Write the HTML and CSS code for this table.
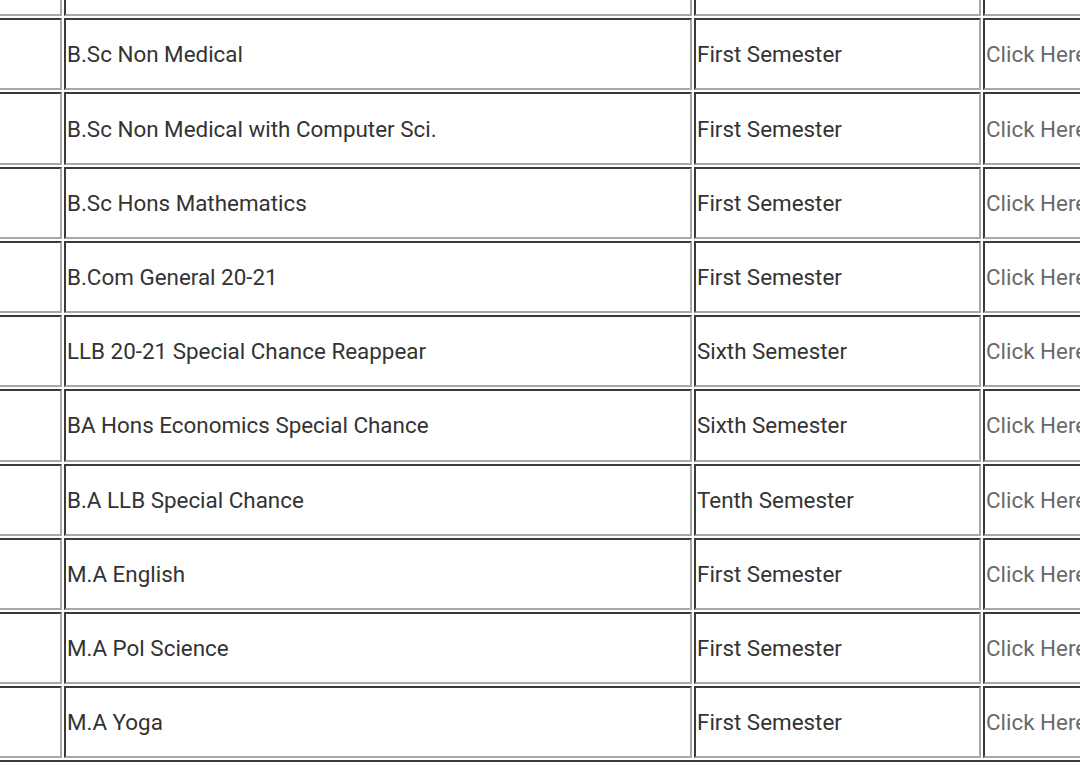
FILE: index.html
```html
<!DOCTYPE html>
<html>
<head>
<meta charset="utf-8">
<link rel="stylesheet" href="styles.css">
</head>
<body>
<div class="viewport">
<table class="results">
<colgroup>
<col class="c-num"><col class="c-course"><col class="c-sem"><col class="c-link">
</colgroup>
<tbody>
<tr><td></td><td></td><td></td><td></td></tr>
<tr><td></td><td>B.Sc Non Medical</td><td>First Semester</td><td class="link">Click Here</td></tr>
<tr><td></td><td>B.Sc Non Medical with Computer Sci.</td><td>First Semester</td><td class="link">Click Here</td></tr>
<tr><td></td><td>B.Sc Hons Mathematics</td><td>First Semester</td><td class="link">Click Here</td></tr>
<tr><td></td><td>B.Com General 20-21</td><td>First Semester</td><td class="link">Click Here</td></tr>
<tr><td></td><td>LLB 20-21 Special Chance Reappear</td><td>Sixth Semester</td><td class="link">Click Here</td></tr>
<tr><td></td><td>BA Hons Economics Special Chance</td><td>Sixth Semester</td><td class="link">Click Here</td></tr>
<tr><td></td><td>B.A LLB Special Chance</td><td>Tenth Semester</td><td class="link">Click Here</td></tr>
<tr><td></td><td>M.A English</td><td>First Semester</td><td class="link">Click Here</td></tr>
<tr><td></td><td>M.A Pol Science</td><td>First Semester</td><td class="link">Click Here</td></tr>
<tr><td></td><td>M.A Yoga</td><td>First Semester</td><td class="link">Click Here</td></tr>
</tbody>
</table>
</div>
</body>
</html>
```

FILE: styles.css
```css
html, body {
  margin: 0;
  padding: 0;
  background: #ffffff;
  overflow: hidden;
}
.viewport {
  width: 1080px;
  height: 776px;
  overflow: hidden;
}
.results {
  margin-top: -60px;
  margin-left: -42px;
  border-collapse: separate;
  border-spacing: 2px;
  border: 2px solid;
  border-color: #b5b5b5 #3a3a3a #3a3a3a #b5b5b5;
  table-layout: fixed;
  width: 1226px;
  font-family: Roboto, "Liberation Sans", sans-serif;
  font-size: 22.4px;
  color: #333333;
}
.c-num { width: 100px; }
.c-course { width: 628px; }
.c-sem { width: 287px; }
.c-link { width: 203px; }
.results td {
  box-sizing: border-box;
  height: 72.22px;
  padding: 0 0 0 1px;
  border: 2px solid;
  border-color: #3a3a3a #a8a8a8 #a8a8a8 #3a3a3a;
  vertical-align: middle;
  white-space: nowrap;
  overflow: hidden;
}
.results td.link {
  color: #6a6a6a;
}
```
